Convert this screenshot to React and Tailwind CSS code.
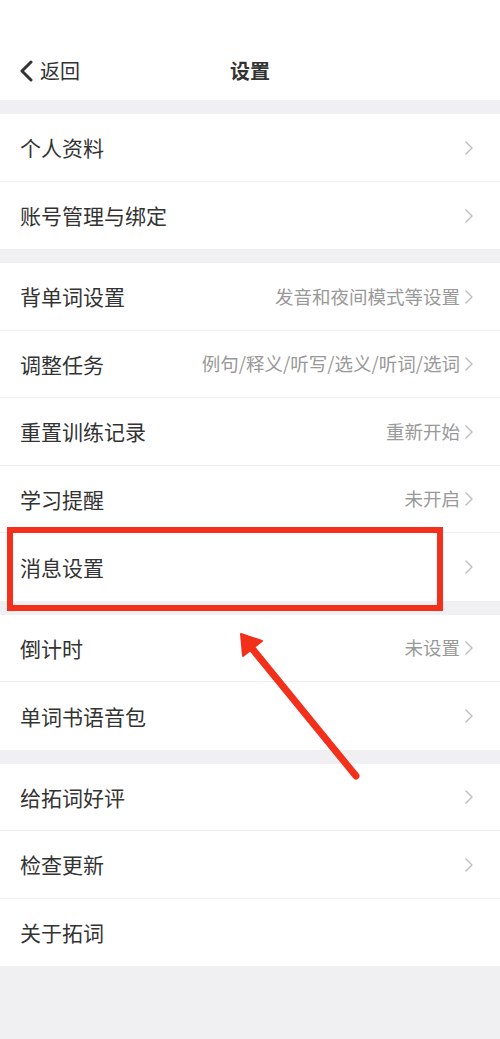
const sections = [
    [{ label: "个人资料" }, { label: "账号管理与绑定" }],
    [
        { label: "背单词设置", value: "发音和夜间模式等设置" },
        { label: "调整任务", value: "例句/释义/听写/选义/听词/选词" },
        { label: "重置训练记录", value: "重新开始" },
        { label: "学习提醒", value: "未开启" },
        { label: "消息设置" },
    ],
    [{ label: "倒计时", value: "未设置" }, { label: "单词书语音包" }],
    [{ label: "给拓词好评" }, { label: "检查更新" }, { label: "关于拓词", noArrow: true }],
];

const Chevron = ({ className }) => (
    <svg width="10" height="16" viewBox="0 0 10 16" className={className}>
        <path d="M2 2 L8 8 L2 14" fill="none" stroke="currentColor" strokeWidth="1.4" strokeLinecap="round" strokeLinejoin="round" />
    </svg>
);

const Row = ({ label, value, noArrow }) => (
    <div className="flex items-center h-[67.5px] pl-5 pr-[26px] pt-[1px]">
        <span className="text-[21px] text-[#333]">{label}</span>
        <div className="ml-auto flex items-center gap-[4px]">
            {value && <span className="text-[18.5px] text-[#999]">{value}</span>}
            {!noArrow && <Chevron className="text-[#bdbdbd]" />}
        </div>
    </div>
);

const App = () => {
    return (
        <div
            className="relative min-h-[1039px] bg-[#f0f0f2]"
            style={{ fontFamily: '"Noto Sans CJK SC", "Noto Sans", sans-serif' }}
        >
            <div className="h-[100px] bg-white flex items-end pb-[14px] relative">
                <div className="flex items-center pl-[18px]">
                    <svg width="18" height="22" viewBox="0 0 18 22" className="text-[#333]">
                        <path d="M13 2 L4 11 L13 20" fill="none" stroke="currentColor" strokeWidth="3" strokeLinecap="round" strokeLinejoin="round" />
                    </svg>
                    <span className="ml-[4px] text-[20px] text-[#333]">返回</span>
                </div>
                <div className="absolute left-0 right-0 bottom-[14px] text-center text-[20px] font-bold text-[#333]">设置</div>
            </div>

            <div className="flex flex-col gap-[14px] pt-[14px]">
                {sections.map((rows, i) => (
                    <div key={i} className="bg-white divide-y divide-[#eeeeee]">
                        {rows.map((r) => (
                            <Row key={r.label} {...r} />
                        ))}
                    </div>
                ))}
            </div>

            {/* annotation overlay */}
            <div className="absolute left-[7px] top-[527px] w-[436px] h-[84px] border-[6px] border-[#f2301c]" />
            <svg className="absolute left-0 top-0" width="500" height="1039" viewBox="0 0 500 1039">
                <line x1="356" y1="776" x2="250" y2="646" stroke="#f2301c" strokeWidth="7" strokeLinecap="round" />
                <polygon points="241,634 262,641 243,656" fill="#f2301c" stroke="#f2301c" strokeWidth="2" strokeLinejoin="round" />
            </svg>
        </div>
    );
};

export default App;
